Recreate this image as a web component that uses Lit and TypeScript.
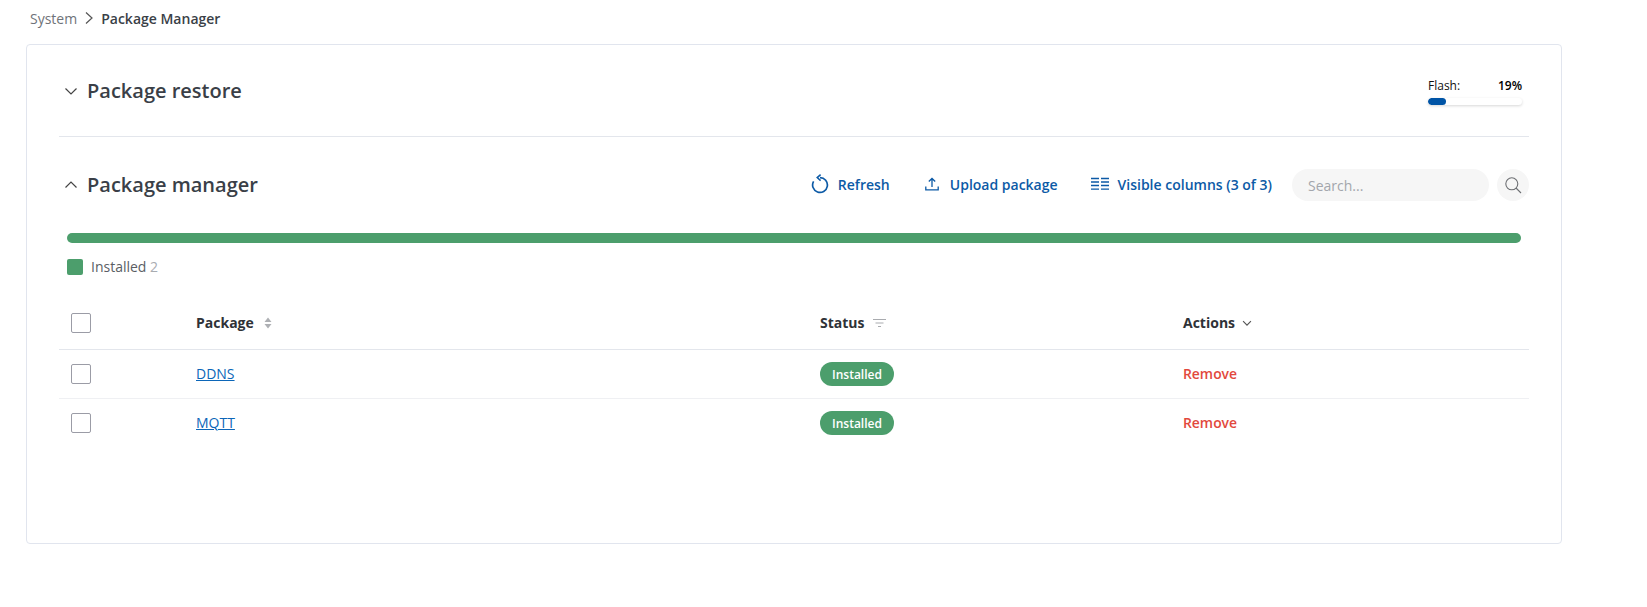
import { LitElement, html, css } from "lit";
import { customElement } from "lit/decorators.js";

const chevDown = (s = 14) => html`<svg class="chev" width=${s} height=${s} viewBox="0 0 14 14" fill="none" stroke="currentColor" stroke-width="1.2"><path d="M1.5 4.5 7 10l5.5-5.5"/></svg>`;
const chevUp = (s = 14) => html`<svg class="chev" width=${s} height=${s} viewBox="0 0 14 14" fill="none" stroke="currentColor" stroke-width="1.2"><path d="M1.5 9.5 7 4l5.5 5.5"/></svg>`;

@customElement("app-root")
export class AppRoot extends LitElement {
  static styles = css`
    :host { display: block; font-family: "Open Sans", sans-serif; color: #3a3f47; background: #fff; height: 607px; overflow: hidden; }
    * { box-sizing: border-box; }
    .crumbs { display: flex; align-items: center; height: 36px; padding-left: 30px; font-size: 14px; }
    .crumbs .sys { color: #6f7379; }
    .crumbs svg { margin: 0 7px 0 7px; color: #555; }
    .crumbs .cur { font-weight: 600; color: #3a3f47; }
    .card { margin: 8px 0 0 26px; width: 1536px; height: 500px; border: 1px solid #e1e5ee; border-radius: 4px; padding: 0 32px; }
    .sec { display: flex; align-items: center; }
    .restore { height: 92px; border-bottom: 1px solid #e3e6ec; justify-content: space-between; }
    .title { display: flex; align-items: center; font-size: 20px; font-weight: 600; color: #3a3f47; }
    .title svg { margin: 1px 9px 0 5px; color: #444; }
    .flash { width: 94px; margin-right: 7px; font-size: 12px; color: #111; margin-top: 1px; }
    .flash-top { display: flex; justify-content: space-between; line-height: 16px; }
    .flash-top b { font-weight: 600; color: #000; }
    .track { height: 7px; margin-top: 4px; border-radius: 4px; background: #fff; box-shadow: 0 1px 3px rgba(0,0,0,.16); overflow: hidden; }
    .fill { height: 100%; border-radius: 4px; background: #0054a6; }
    .mgr { height: 88px; justify-content: space-between; padding-top: 6px; }
    .tools { display: flex; align-items: center; }
    .tool { display: flex; align-items: center; font-size: 14px; font-weight: 600; color: #0c5aa6; }
    .tool.r { margin-right: 35px; }
    .tool.u { margin-right: 33px; }
    .tool.c { margin-right: 20px; }
    .search { width: 197px; height: 32px; margin-top: 2px; border-radius: 16px; background: #f6f6f6; color: #a3a6ac; font-size: 14px; display: flex; align-items: center; padding-left: 16px; margin-right: 8px; }
    .sbtn { width: 32px; height: 32px; margin-top: 2px; border-radius: 50%; background: #f6f6f6; display: flex; align-items: center; justify-content: center; }
    .bar { margin: 8px 8px 0; height: 10px; border-radius: 5px; background: #4c9e6c; }
    .legend { display: flex; align-items: center; margin: 16px 8px 0; height: 16px; font-size: 14px; color: #5a5e64; }
    .legend-text { padding-bottom: 2px; }
    .sw { width: 16px; height: 16px; border-radius: 2px; background: #4c9e6c; margin-right: 8px; }
    .legend span { color: #a9acb1; }
    .row { display: grid; grid-template-columns: 137px 624px 363px 1fr; align-items: center; font-size: 14px; }
    .head { margin-top: 26px; height: 49px; border-bottom: 1px solid #e3e6ec; font-weight: 700; color: #2f3237; padding-bottom: 5px; }
    .head > div, .line > div { display: flex; align-items: center; }
    .line { height: 49px; border-bottom: 1px solid #eff0f3; }
    .line.last { border-bottom: none; height: 48px; }
    .cb { width: 20px; height: 20px; margin-left: 12px; border: 1px solid #9b9ca6; border-radius: 2px; background: #fff; }
    .head .sort { margin-left: 10px; }
    .head .filt { margin-left: 9px; }
    .head .act { margin-left: 7px; }
    .line .txt { padding-bottom: 2px; }
    a { color: #0c66b8; text-decoration: underline; }
    .badge { width: 74px; height: 24px; border-radius: 12px; background: #4c9e6c; color: #fff; font-size: 12px; font-weight: 600; display: flex; align-items: center; justify-content: center; }
    .rm { color: #e2483d; font-weight: 600; font-size: 13.9px; }
  `;

  render() {
    const rows = ["DDNS", "MQTT"];
    return html`
      <div class="crumbs">
        <span class="sys">System</span>
        <svg width="10" height="14" viewBox="0 0 10 14" fill="none" stroke="currentColor" stroke-width="1.2"><path d="M2 1.5 8 7l-6 5.5"/></svg>
        <span class="cur">Package Manager</span>
      </div>
      <div class="card">
        <div class="sec restore">
          <div class="title">${chevDown()}Package restore</div>
          <div class="flash">
            <div class="flash-top"><span>Flash:</span><b>19%</b></div>
            <div class="track"><div class="fill" style="width:19%"></div></div>
          </div>
        </div>
        <div class="sec mgr">
          <div class="title">${chevUp()}Package manager</div>
          <div class="tools">
            <div class="tool r">
              <svg width="20" height="20" viewBox="0 0 20 20" fill="none" stroke="currentColor" stroke-width="1.7" style="margin-right:8px"><path d="M10 3.6A7.4 7.4 0 1 1 3.6 7.3"/><path d="M10.6.6 7.2 3.6l3.4 3" stroke-width="1.5"/></svg>
              Refresh
            </div>
            <div class="tool u">
              <svg width="14" height="14" viewBox="0 0 14 14" fill="none" stroke="currentColor" stroke-width="1.3" style="margin-right:11px"><path d="M7 10V1.5M3.8 4.5 7 1.5l3.2 3M.8 9.5v3.4h12.4V9.5"/></svg>
              Upload package
            </div>
            <div class="tool c">
              <svg width="18" height="14" viewBox="0 0 18 14" fill="none" stroke="currentColor" stroke-width="1.3" style="margin-right:9px"><path d="M0 1.5h8M0 5h8M0 8.5h8M0 12.2h8M10 1.5h8M10 5h8M10 8.5h8M10 12.2h8"/></svg>
              Visible columns (3 of 3)
            </div>
            <div class="search">Search...</div>
            <div class="sbtn">
              <svg width="18" height="18" viewBox="0 0 18 18" fill="none" stroke="#6d6f73" stroke-width="1.1"><circle cx="7.8" cy="7.8" r="6"/><path d="m12 12 5 5"/></svg>
            </div>
          </div>
        </div>
        <div class="bar"></div>
        <div class="legend"><div class="sw"></div><div class="legend-text">Installed <span>2</span></div></div>
        <div class="row head">
          <div><div class="cb"></div></div>
          <div>Package
            <svg class="sort" width="8" height="12" viewBox="0 0 8 12" fill="#aeb0b4"><path d="M4 .5 7.5 5h-7zM4 11.5.5 7h7z"/></svg>
          </div>
          <div>Status
            <svg class="filt" width="13" height="10" viewBox="0 0 13 10" fill="none" stroke="#a9abaf"><path d="M0 1.5h13M2.5 5h8M5 8.5h3"/></svg>
          </div>
          <div>Actions
            <svg class="act" width="10" height="10" viewBox="0 0 14 14" fill="none" stroke="#555" stroke-width="1.6"><path d="M1.5 4.5 7 10l5.5-5.5"/></svg>
          </div>
        </div>
        ${rows.map((r, i) => html`
          <div class="row line ${i === rows.length - 1 ? "last" : ""}">
            <div><div class="cb"></div></div>
            <div class="txt"><a href="#">${r}</a></div>
            <div><div class="badge">Installed</div></div>
            <div class="rm txt">Remove</div>
          </div>`)}
      </div>
    `;
  }
}
